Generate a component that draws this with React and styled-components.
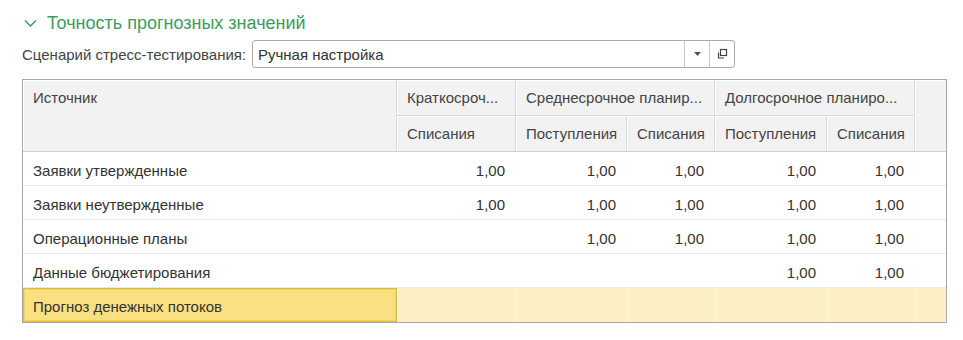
import React from "react";
import styled, { createGlobalStyle } from "styled-components";

const Global = createGlobalStyle`
  html, body { margin: 0; padding: 0; background: #fff; }
  body { font-family: "Liberation Sans", Arial, sans-serif; }
`;

const Page = styled.div`
  width: 963px;
  height: 340px;
  padding: 12px 0 0 22px;
  box-sizing: border-box;
  display: flex;
  flex-direction: column;
`;

const TitleRow = styled.div`
  display: flex;
  align-items: center;
  height: 22px;
  gap: 10px;
  padding-left: 2px;
  color: #3a9c62;
  font-size: 18px;
`;

const FieldRow = styled.div`
  display: flex;
  align-items: center;
  height: 28px;
  margin-top: 6px;
`;

const Label = styled.div`
  width: 230px;
  font-size: 15px;
  color: #444;
  white-space: nowrap;
`;

const Input = styled.div`
  width: 483px;
  height: 28px;
  box-sizing: border-box;
  border: 1px solid #aaa;
  border-radius: 3px;
  display: flex;
  align-items: stretch;
  background: #fff;
`;

const InputText = styled.div`
  flex: 1;
  display: flex;
  align-items: center;
  padding-left: 5px;
  font-size: 15px;
  color: #333;
`;

const InputButton = styled.div`
  width: 24px;
  border-left: 1px solid #c8c8c8;
  display: flex;
  align-items: center;
  justify-content: center;
`;

const Table = styled.div`
  margin-top: 11px;
  width: 925px;
  box-sizing: border-box;
  border: 1px solid #a8a8a8;
  display: grid;
  grid-template-columns: 374px 119px 111px 88px 112px 88px 31px;
  grid-template-rows: 36px 36px repeat(5, 34px);
  font-size: 15px;
`;

const HeadCell = styled.div`
  grid-column: span ${(p) => p.$cols || 1};
  grid-row: span ${(p) => p.$rows || 1};
  background: #f2f2f2;
  color: #444;
  box-sizing: border-box;
  border-right: ${(p) => (p.$last ? "none" : "1px solid #dadada")};
  border-bottom: 1px solid ${(p) => (p.$bottom ? "#cfcfcf" : "#dadada")};
  box-shadow: inset 1px 1px 0 #fff;
  padding: 10px 10px 0 10px;
  white-space: nowrap;
  overflow: hidden;
  line-height: 16px;
`;

const Cell = styled.div`
  box-sizing: border-box;
  border-bottom: ${(p) => (p.$lastRow ? "none" : "1px solid #e8e8e8")};
  display: flex;
  align-items: center;
  justify-content: ${(p) => (p.$num ? "flex-end" : "flex-start")};
  padding: 3px ${(p) => (p.$num ? "11px" : "10px")} 0;
  color: #333;
  white-space: nowrap;
  background: ${(p) => (p.$hl ? "#fdefc4" : "#fff")};
  border-left: ${(p) => (p.$hl && p.$num ? "1px solid #fff6dc" : "none")};
`;

const CurrentCell = styled.div`
  box-sizing: border-box;
  display: flex;
  align-items: center;
  padding: 2px 9px 0;
  color: #333;
  background: #fbe081;
  border: 1px solid #dcbd43;
  box-shadow: inset 0 0 0 1px #f3d25e;
`;

const Chevron = () => (
  <svg width="13" height="9" viewBox="0 0 13 9">
    <path d="M1 1.5 L6.5 7 L12 1.5" fill="none" stroke="#3a9c62" strokeWidth="1.5" />
  </svg>
);

const Arrow = () => (
  <svg width="7" height="4" viewBox="0 0 7 4">
    <path d="M0 0 H7 L3.5 4 Z" fill="#555" />
  </svg>
);

const CopyIcon = () => (
  <svg width="12" height="12" viewBox="0 0 12 12">
    <rect x="4.5" y="1.5" width="6" height="6" fill="none" stroke="#444" strokeWidth="1.2" />
    <path d="M2.5 4.5 V10 H8" fill="none" stroke="#444" strokeWidth="1.2" />
  </svg>
);

const rows = [
  ["Заявки утвержденные", "1,00", "1,00", "1,00", "1,00", "1,00"],
  ["Заявки неутвержденные", "1,00", "1,00", "1,00", "1,00", "1,00"],
  ["Операционные планы", "", "1,00", "1,00", "1,00", "1,00"],
  ["Данные бюджетирования", "", "", "", "1,00", "1,00"],
];

export default function App() {
  return (
    <>
      <Global />
      <Page>
        <TitleRow>
          <Chevron />
          <span>Точность прогнозных значений</span>
        </TitleRow>
        <FieldRow>
          <Label>Сценарий стресс-тестирования:</Label>
          <Input>
            <InputText>Ручная настройка</InputText>
            <InputButton>
              <Arrow />
            </InputButton>
            <InputButton>
              <CopyIcon />
            </InputButton>
          </Input>
        </FieldRow>
        <Table>
          <HeadCell $rows={2} $bottom>Источник</HeadCell>
          <HeadCell>Краткосроч...</HeadCell>
          <HeadCell $cols={2}>Среднесрочное планир...</HeadCell>
          <HeadCell $cols={2}>Долгосрочное планиро...</HeadCell>
          <HeadCell $rows={2} $last $bottom />
          <HeadCell $bottom>Списания</HeadCell>
          <HeadCell $bottom>Поступления</HeadCell>
          <HeadCell $bottom>Списания</HeadCell>
          <HeadCell $bottom>Поступления</HeadCell>
          <HeadCell $bottom>Списания</HeadCell>
          {rows.map((r, i) => (
            <React.Fragment key={i}>
              <Cell>{r[0]}</Cell>
              {r.slice(1).map((v, j) => (
                <Cell key={j} $num>
                  {v}
                </Cell>
              ))}
              <Cell />
            </React.Fragment>
          ))}
          <CurrentCell>Прогноз денежных потоков</CurrentCell>
          {[0, 1, 2, 3, 4, 5].map((j) => (
            <Cell key={j} $num $hl $lastRow />
          ))}
        </Table>
      </Page>
    </>
  );
}
